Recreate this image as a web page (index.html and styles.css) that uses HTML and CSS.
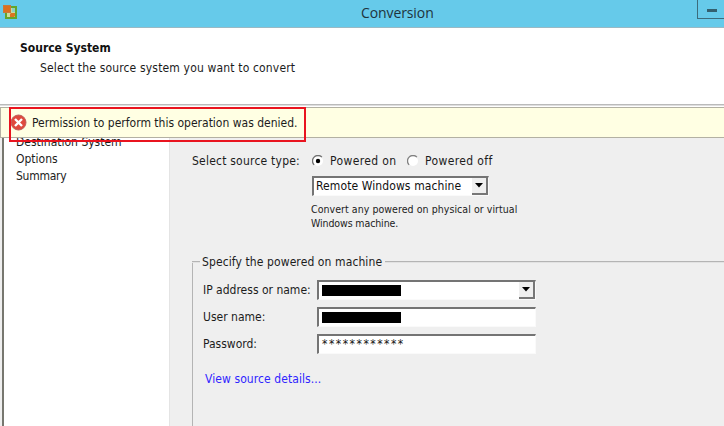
FILE: index.html
```
<!DOCTYPE html>
<html lang="en">
<head>
<meta charset="utf-8">
<title>Conversion</title>
<link rel="stylesheet" href="styles.css">
</head>
<body>
<div class="window">
  <header class="titlebar">
    <svg class="app-icon" width="15" height="15" viewBox="0 0 15 15">
      <rect x="3" y="2" width="10" height="11" fill="#c9dda0" stroke="#64a52b" stroke-width="2"/>
      <path d="M9 3h3v4H9z" fill="#8fcfc0"/>
      <path d="M8 8h4v3l-1 1H7V9z" fill="#dd7420"/>
      <rect x="0.500" y="0.500" width="7" height="7" fill="#dc7020" stroke="#c9793c"/>
    </svg>
    <h1 class="title">Conversion</h1>
    <button class="minimize" aria-label="Minimize"><span class="dash"></span></button>
  </header>
  <section class="heading">
    <h2 class="heading-title">Source System</h2>
    <p class="heading-sub">Select the source system you want to convert</p>
  </section>
  <main class="body">
    <nav class="steps">
      <div class="step">Destination System</div>
      <div class="step">Options</div>
      <div class="step step-summary">Summary</div>
    </nav>
    <form class="panel">
      <div class="type-row">
        <span class="type-label">Select source type:</span>
        <svg class="radio" width="12" height="12" viewBox="0 0 12 12">
          <circle cx="6" cy="6" r="5" fill="#fff"/>
          <path d="M2.100 9.900A5.500 5.500 0 0 1 9.900 2.100" fill="none" stroke="#707070" stroke-width="1.300"/>
          <circle cx="6" cy="6" r="2.200" fill="#000"/>
        </svg>
        <span class="radio-text radio-on">Powered on</span>
        <svg class="radio" width="12" height="12" viewBox="0 0 12 12">
          <circle cx="6" cy="6" r="5" fill="#fff"/>
          <path d="M2.100 9.900A5.500 5.500 0 0 1 9.900 2.100" fill="none" stroke="#808080" stroke-width="1.300"/>
        </svg>
        <span class="radio-text">Powered off</span>
      </div>
      <div class="field machine"><span class="machine-text">Remote Windows machine</span><span class="drop"><svg width="8" height="5" viewBox="0 0 8 5"><path d="M0 0h8L4 4.500z"/></svg></span></div>
      <p class="hint">Convert any powered on physical or virtual<br><span class="hint-end">Windows machine.</span></p>
      <section class="group">
        <div class="legend"><span class="legend-start"></span><span class="legend-text">Specify the powered on machine</span><span class="legend-line"></span></div>
        <div class="group-body">
          <div class="row"><label>IP address or name:</label><div class="field"><span class="redacted"></span><span class="drop"><svg width="8" height="5" viewBox="0 0 8 5"><path d="M0 0h8L4 4.500z"/></svg></span></div></div>
          <div class="row"><label>User name:</label><div class="field"><span class="redacted"></span></div></div>
          <div class="row"><label>Password:</label><div class="field"><span class="password">************</span></div></div>
          <a class="details">View source details...</a>
        </div>
      </section>
    </form>
  </main>
  <div class="alert">
    <svg class="error-icon" width="17" height="17" viewBox="0 0 17 17">
      <circle cx="8.500" cy="8.500" r="7.500" fill="#df4a3d" stroke="#c0605c"/>
      <path d="M5 5l7 7M12 5l-7 7" stroke="#fff" stroke-width="2.400"/>
    </svg>
    <span class="alert-text">Permission to perform this operation was denied.</span>
  </div>
  <div class="marker"></div>
</div>
</body>
</html>
```
FILE: styles.css
```
* { box-sizing: border-box; }
body { margin: 0; }
.window {
  position: relative;
  display: flex;
  flex-direction: column;
  width: 724px;
  height: 426px;
  overflow: hidden;
  background: #efefef;
  color: #1c1c1c;
  font: 12px/17px "DejaVu Sans Condensed", "DejaVu Sans", sans-serif;
  font-stretch: condensed;
  white-space: nowrap;
}
h1, h2, p { margin: 0; font-size: inherit; font-weight: normal; }
.titlebar {
  display: flex;
  flex-shrink: 0;
  height: 28px;
  background: #66caea;
  border-bottom: 1px solid #9ab9c4;
}
.app-icon { margin: 5px 0 0 3px; }
.title {
  margin: 3px 0 0 343px;
  color: #20343c;
  font: 14px/20px "Open Sans", sans-serif;
  letter-spacing: -0.1px;
}
.minimize {
  display: flex;
  justify-content: center;
  width: 28px;
  height: 19px;
  margin: 0 -1px 0 auto;
  padding: 9px 0 0;
  background: none;
  border: solid #3c6c7c;
  border-width: 0 0 1px 1px;
}
.dash { width: 10px; height: 3px; background: #33606f; }
.heading {
  flex-shrink: 0;
  height: 78px;
  padding: 12px 20px;
  background: #fff;
  border-bottom: 1px solid #dedede;
  box-shadow: inset 0 -1px #bababa;
}
.heading-title { color: #111; font-weight: bold; }
.heading-sub { margin: 3px 0 0 20px; letter-spacing: 0.16px; }
.body { display: flex; flex: 1; min-height: 0; }
.steps {
  width: 168px;
  margin-left: 2px;
  padding: 28px 0 0 12px;
  background: #fff;
  border-left: 2px solid #77776f;
  border-right: 1px solid #e4e4e4;
}
.step-summary { letter-spacing: -0.25px; }
.panel { flex: 1; padding: 46px 0 0 22px; }
.type-row { display: flex; align-items: center; height: 18px; }
.type-label { width: 120px; letter-spacing: 0.22px; }
.radio { margin-right: 6px; }
.type-row span { padding-top: 1px; }
.radio-text { letter-spacing: 0.38px; }
.radio-on { width: 77px; }
.field {
  display: flex;
  width: 219px;
  height: 20px;
  background: #fff;
  border: solid;
  border-width: 2px 1px 1px 2px;
  border-color: #747474 #fafafa #fafafa #747474;
}
.machine { width: 177px; margin: 6px 0 0 120px; padding-left: 2px; color: #111; }
.machine-text { letter-spacing: 0.1px; }
.drop {
  display: flex;
  align-items: center;
  justify-content: center;
  width: 16px;
  height: 17px;
  margin-left: auto;
  background: #efefef;
  border-right: 2px solid #777;
  border-bottom: 2px solid #777;
}
.hint { margin: 6px 0 0 119px; font-size: 10.5px; line-height: 14px; letter-spacing: 0.06px; }
.hint-end { letter-spacing: -0.1px; }
.group { margin-top: 23px; }
.legend { display: flex; align-items: center; height: 18px; }
.legend-start, .legend-line { height: 2px; border-top: 1px solid #b4b4b4; background: #e2e2e2; }
.legend-start { width: 8px; margin-right: 2px; }
.legend-text { width: 183px; letter-spacing: 0.1px; }
.legend-line { flex: 1; }
.group-body {
  height: 180px;
  margin-top: -9px;
  padding: 18px 0 0 10px;
  border-left: 1px solid #b4b4b4;
}
.row { display: flex; align-items: center; height: 20px; margin-bottom: 7px; }
.row label { width: 114px; }
.redacted { width: 79px; height: 11px; margin: 3px 0 0 3px; background: #000; }
.password { padding-left: 3px; color: #111; letter-spacing: 1.5px; }
.details { display: block; margin: 17px 0 0 2px; color: #2f25ff; letter-spacing: 0.08px; }
.alert {
  position: absolute;
  top: 107px;
  left: 0;
  display: flex;
  align-items: center;
  width: 725px;
  height: 31px;
  padding-left: 9px;
  background: #ffffe3;
  border: 1px solid #b3b1a3;
  box-shadow: 0 -1px #fff;
}
.alert-text { margin-left: 5px; padding-top: 2px; }
.marker {
  position: absolute;
  top: 107px;
  left: 9px;
  width: 297px;
  height: 35px;
  border: 2px solid #e9141f;
}
```
